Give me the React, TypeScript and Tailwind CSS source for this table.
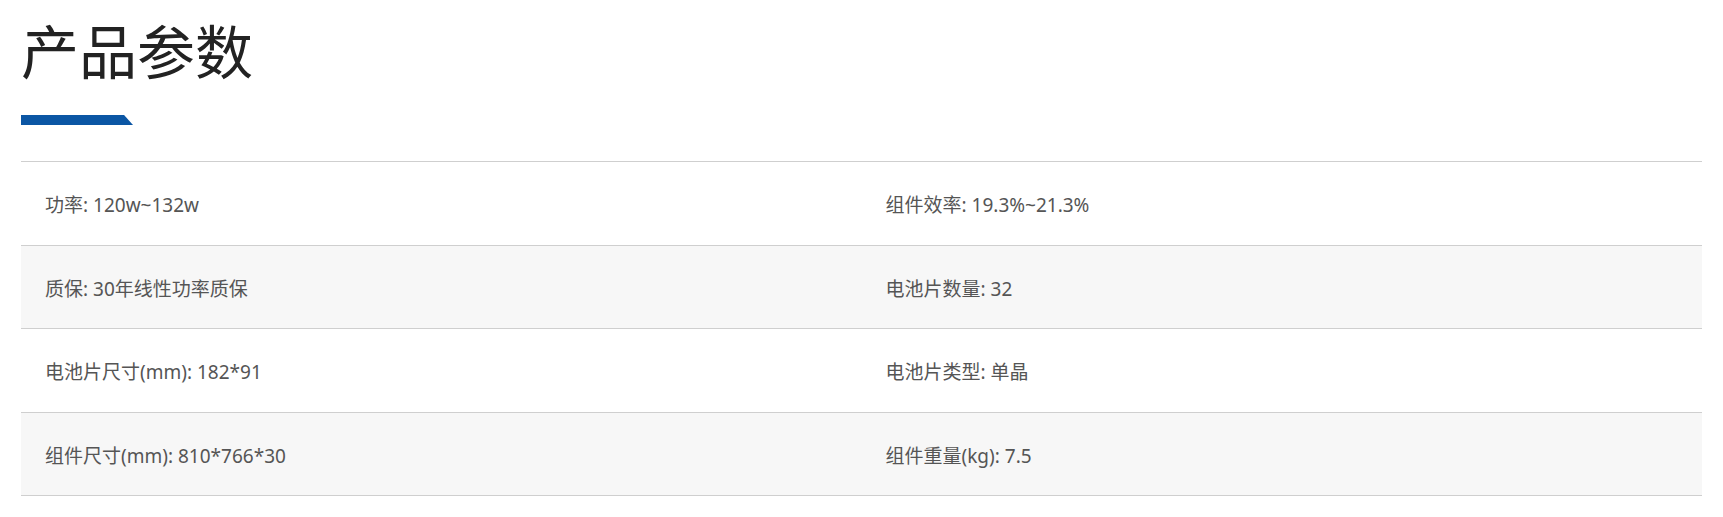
import React from 'react';

const rows: [string, string][][] = [
  [['功率', '120w~132w'], ['组件效率', '19.3%~21.3%']],
  [['质保', '30年线性功率质保'], ['电池片数量', '32']],
  [['电池片尺寸(mm)', '182*91'], ['电池片类型', '单晶']],
  [['组件尺寸(mm)', '810*766*30'], ['组件重量(kg)', '7.5']],
];

const App: React.FC = () => {
  return (
    <div className="min-h-screen bg-white px-[21px] pt-[15px] font-['Noto_Sans','Noto_Sans_CJK_SC',sans-serif]">
      {/* Title */}
      <h1 className="text-[58px] leading-[68px] text-[#222] font-['Noto_Sans_CJK_SC',sans-serif] font-normal">产品参数</h1>
      <div className="mt-[32px] h-[10px] w-[112px] bg-[#0b56a4] [clip-path:polygon(0_0,92%_0,100%_100%,0_100%)]"></div>

      {/* Params table */}
      <div className="mt-[36px] border-t border-[#cfcfcf]">
        {rows.map((row, i) => (
          <div
            key={i}
            className={`grid grid-cols-2 items-center border-b border-[#cfcfcf] ${i % 2 === 1 ? 'h-[83px] bg-[#f7f7f7]' : 'h-[84px] bg-white'}`}
          >
            {row.map(([label, value]) => (
              <div key={label} className="px-6 pt-1 text-[19px] text-[#555]">
                {label}: {value}
              </div>
            ))}
          </div>
        ))}
      </div>
    </div>
  );
};

export default App;
